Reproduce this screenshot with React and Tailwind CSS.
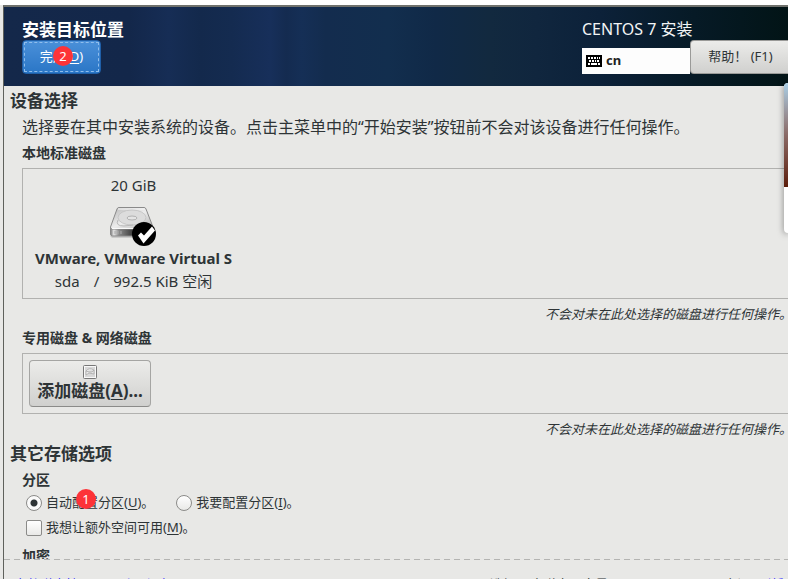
import React from 'react';

const PanelTitle = ({ children }) => (
  <h2 className="pl-1.5 text-[17px] leading-6 font-bold">{children}</h2>
);

const SubTitle = ({ children }) => (
  <h3 className="pl-[18px] text-[14px] leading-6 font-bold">{children}</h3>
);

const Note = ({ children }) => (
  <p className="-mr-1 mt-[3px] text-right text-[13px] leading-6 italic whitespace-nowrap">{children}</p>
);

const StepBadge = ({ number, className }) => (
  <span
    className={`absolute flex h-5 w-5 items-center justify-center rounded-full bg-[#fd3338] text-[13px] leading-5 text-white ${className}`}
  >
    {number}
  </span>
);

const Key = ({ children }) => <u className="underline-offset-2">{children}</u>;

const KeyboardIcon = () => (
  <svg width="16" height="12" viewBox="0 0 16 12" shapeRendering="crispEdges" aria-hidden="true">
    <rect width="16" height="12" rx="1" fill="#000" />
    <path
      d="M2 2h2v2H2zM5 2h2v2H5zM8 2h2v2H8zM11 2h1v2h-1zM13 2h1v2h-1zM3 5h2v2H3zM6 5h2v2H6zM9 5h1v2H9zM11 5h2v2h-2zM2 8h2v2H2zM5 8h6v2H5zM12 8h2v2h-2z"
      fill="#fff"
    />
  </svg>
);

const DiskIcon = () => (
  <svg width="48" height="49" viewBox="0 0 48 49" aria-hidden="true">
    <defs>
      <linearGradient id="diskTop" x1="0" y1="0" x2="1" y2="1">
        <stop offset="0" stopColor="#b8b8b8" />
        <stop offset="0.5" stopColor="#ececec" />
        <stop offset="1" stopColor="#b0b0b0" />
      </linearGradient>
      <linearGradient id="diskFront" x1="0" y1="0" x2="1" y2="0">
        <stop offset="0" stopColor="#777" />
        <stop offset="0.08" stopColor="#e4e4e4" />
        <stop offset="0.2" stopColor="#8a8a8a" />
        <stop offset="0.5" stopColor="#444" />
        <stop offset="1" stopColor="#333" />
      </linearGradient>
    </defs>
    <path d="M0 39h42v2H2z" fill="#000" opacity="0.12" />
    <path d="M.5 31h42v6q0 2-2 2h-38q-2 0-2-2z" fill="url(#diskFront)" stroke="#888" />
    <path d="M7 12q.5-1.500 2-1.500h25q1.500 0 2 1.500l7 18q.5 2-1.500 2h-39.500q-2 0-1.500-2z" fill="url(#diskTop)" stroke="#8a8a8a" />
    <path d="M8 12h27M2 31.500h40" stroke="#fafafa" />
    <ellipse cx="22" cy="20.500" rx="14" ry="7.500" fill="#dcdcdc" stroke="#c0c0c0" strokeWidth="0.800" />
    <ellipse cx="22" cy="21" rx="5" ry="2" fill="#e4e4e4" stroke="#a4a4a4" strokeWidth="0.800" />
    <path d="M8 23q-3 6 6 6l9-1" fill="none" stroke="#b8b8b8" />
    <path d="M5 34v3M8 34v3M11 34v3" stroke="#aaa" />
    <circle cx="34" cy="37" r="12" fill="#000" />
    <path d="M28 38.500l3-3 3 3 8-9 3 4-11.500 13z" fill="#fff" />
  </svg>
);

const SmallDiskIcon = () => (
  <svg width="14" height="14" viewBox="0 0 14 14" aria-hidden="true">
    <rect x="0.500" y="0.500" width="13" height="13" rx="1" fill="#f8f8f8" stroke="#777" />
    <rect x="2" y="2" width="10" height="10" fill="#d8d8d8" />
    <path d="M3 6q3-4 8-1q-1 3-5 2zM3 6v4l3-2 5 1V5" fill="#ececec" stroke="#aaa" strokeWidth="0.800" />
  </svg>
);

const RADIO_CLASS =
  'mr-1 h-4 w-4 appearance-none rounded-full border border-[#8b8b89] bg-linear-to-b from-white to-[#e9e9e7] checked:bg-[radial-gradient(circle,#2e3436_3px,#fafafa_4px)]';

const App = () => {
  return (
    <div className="relative flex h-screen flex-col overflow-hidden bg-[#e8e8e6] pl-[3px] font-['Noto_Sans','Noto_Sans_CJK_SC',sans-serif] text-[#2e3436]">
      <div className="-ml-[3px] h-[5px] shrink-0 bg-white" />

      <div className="flex min-h-0 flex-1 flex-col border-t-2 border-l border-t-[#6f716c] border-l-[#5f615c]">
        <header className="flex h-[79px] shrink-0 justify-between bg-[linear-gradient(90deg,#14284a_0%,#13274a_16%,#162d55_21%,#13294c_25%,#142b50_29%,#172f5a_34%,#142b50_36%,#152f56_38%,#132c4e_41%,#122e4e_49%,#102947_55%,#12293f_62%,#10263e_68%,#0c2139_76%,#061a26_88%,#021416_100%)]">
          <div className="pt-3 pl-[18px]">
            <h1 className="text-[17px] leading-[21px] font-bold text-white">安装目标位置</h1>
            <button
              type="button"
              className="relative h-[34px] w-[79px] rounded-sm border border-[#1f5fa8] bg-linear-to-b from-[#4a90d9] to-[#2a76c6] p-px text-[13px] text-white"
            >
              <span className="flex h-full items-center justify-center border border-dashed border-[#8fbdec]">
                <span>完成(<Key>D</Key>)</span>
              </span>
              <StepBadge number="2" className="top-[5px] left-[30px]" />
            </button>
          </div>

          <div className="w-[206px] pt-3">
            <div className="text-[16px] leading-[21px] whitespace-nowrap text-[#f2f4f5]">CENTOS 7 安装</div>
            <div className="flex items-end">
              <div className="flex h-[26px] w-[108px] items-center gap-1 bg-[#fdfdfd] pl-1 text-[13px] font-bold text-[#222]">
                <KeyboardIcon />
                cn
              </div>
              <button
                type="button"
                className="h-[34px] flex-1 rounded-l-sm border border-r-0 border-[#9a9a98] bg-linear-to-b from-[#ececea] to-[#d0d0ce] pl-0.5 text-[13px] whitespace-nowrap"
              >
                帮助！ (F1)
              </button>
            </div>
          </div>
        </header>

        <main className="min-h-0 flex-1 overflow-hidden pt-[3px]">
          <PanelTitle>设备选择</PanelTitle>
          <p className="pl-[18px] text-[16px] leading-7 whitespace-nowrap">
            选择要在其中安装系统的设备。点击主菜单中的“开始安装”按钮前不会对该设备进行任何操作。
          </p>

          <SubTitle>本地标准磁盘</SubTitle>
          <div className="mt-[3px] ml-[18px] flex border border-r-0 border-[#b1b1af] px-3 pt-1 pb-1.5 text-[15px] leading-6">
            <div className="flex flex-col items-center">
              <div>20 GiB</div>
              <DiskIcon />
              <div className="font-bold">VMware, VMware Virtual S</div>
              <div className="flex gap-3.5 leading-[22px]">
                <span>sda</span>
                <span>/</span>
                <span>992.5 KiB 空闲</span>
              </div>
            </div>
          </div>
          <Note>不会对未在此处选择的磁盘进行任何操作。</Note>

          <SubTitle>专用磁盘 &amp; 网络磁盘</SubTitle>
          <div className="mt-[3px] ml-[18px] border border-r-0 border-[#b1b1af] p-1.5">
            <button
              type="button"
              className="flex h-[47px] w-[122px] flex-col items-center justify-end rounded-sm border border-[#a5a5a3] border-b-[#8b8b89] bg-linear-to-b from-[#ececea] to-[#d0d0ce] pb-[3px] text-[17px] font-bold whitespace-nowrap"
            >
              <SmallDiskIcon />
              <span className="leading-6">添加磁盘(<Key>A</Key>)...</span>
            </button>
          </div>
          <Note>不会对未在此处选择的磁盘进行任何操作。</Note>

          <div className="pt-px">
            <PanelTitle>其它存储选项</PanelTitle>
          </div>
          <div className="pt-0.5">
            <SubTitle>分区</SubTitle>
          </div>
          <div className="relative flex h-[22px] gap-[22px] pl-[22px] text-[13px]">
            <label className="flex items-center">
              <input type="radio" name="partition" defaultChecked className={RADIO_CLASS} />
              <span>自动配置分区(<Key>U</Key>)。</span>
            </label>
            <label className="flex items-center">
              <input type="radio" name="partition" className={RADIO_CLASS} />
              <span>我要配置分区(<Key>I</Key>)。</span>
            </label>
            <StepBadge number="1" className="-top-[3px] left-[72px]" />
          </div>
          <label className="flex h-7 items-center pl-[22px] text-[13px]">
            <input
              type="checkbox"
              className="mr-1 h-4 w-4 appearance-none rounded-xs border border-[#8b8b89] bg-linear-to-b from-white to-[#e9e9e7] checked:bg-[#4a90d9]"
            />
            <span>我想让额外空间可用(<Key>M</Key>)。</span>
          </label>
          <div className="pt-0.5">
            <SubTitle>加密</SubTitle>
          </div>
        </main>

        <footer className="h-5 shrink-0 overflow-hidden">
          <div className="h-px bg-[repeating-linear-gradient(90deg,#b4b4b2_0px,#b4b4b2_6px,#e8e8e6_6px,#e8e8e6_10px)]" />
          <div className="flex justify-between pt-3.5 pr-1 pl-2.5 text-[13px] leading-5 whitespace-nowrap">
            <a href="#summary" className="text-[#2a1fff]">完整磁盘摘要以及引导程序</a>
            <div className="flex gap-2">
              <span>已选择 1 个磁盘；容量 20 GiB；992.5 KiB 空闲</span>
              <a href="#refresh" className="text-[#2a1fff]">刷新</a>
            </div>
          </div>
        </footer>
      </div>

      {/* edge of a floating card coming in from the right */}
      <div className="absolute top-[83px] right-0 h-[150px] w-1 overflow-hidden rounded-l-sm bg-white shadow-[0_1px_6px_#00000080]">
        <div className="h-[104px] bg-linear-to-b from-[#a9cfe6] via-[#8a6a66] to-[#5c1d0a]" />
      </div>
    </div>
  );
};

export default App;
